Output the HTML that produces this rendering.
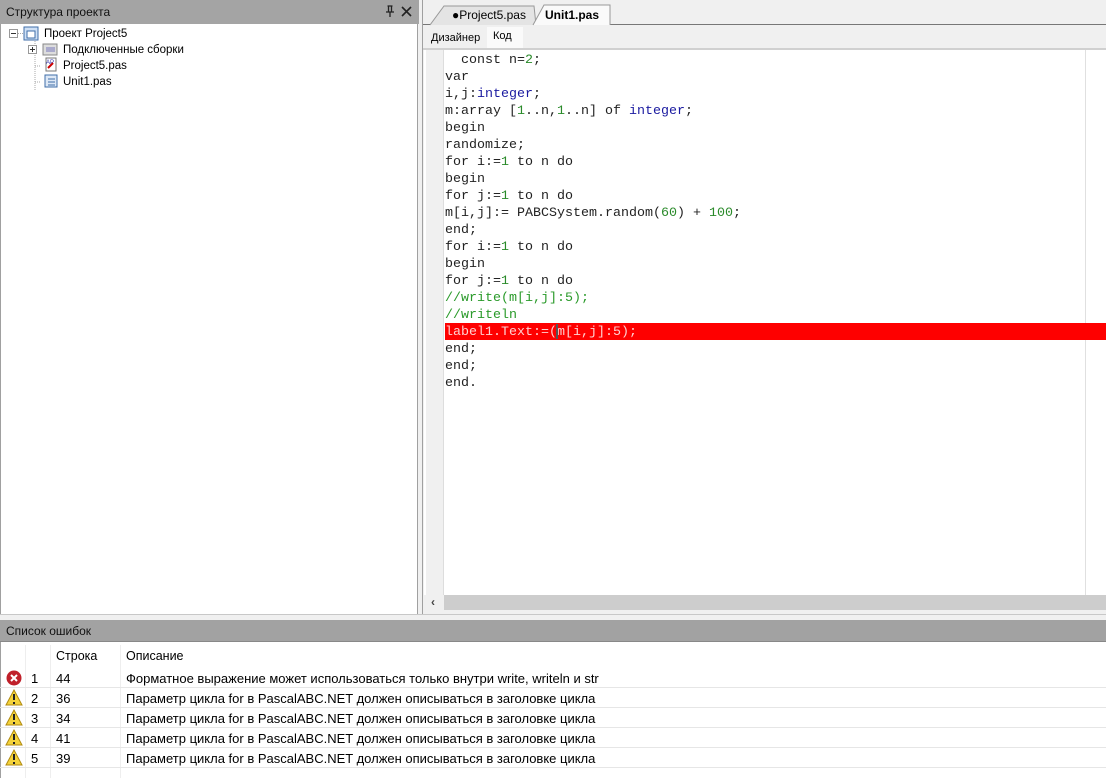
<!DOCTYPE html>
<html><head><meta charset="utf-8"><style>
*{margin:0;padding:0;box-sizing:border-box}
body{width:1106px;height:778px;background:#f0f0f0;position:relative;overflow:hidden;font-family:"Liberation Sans",sans-serif;font-size:12px;color:#000}
.abs{position:absolute}
.title{background:#a4a4a4;color:#111;font-size:12px;padding-left:6px;line-height:24px}
.code{font-family:"Liberation Mono",monospace;font-size:13.33px;line-height:17px;white-space:pre;color:#222}
.k{color:#1a1aa0}.n{color:#2a8a2a}.c{color:#2a9a2a}
.row{position:absolute;left:0;width:1106px;height:20px;border-bottom:1px solid #e6e6e6;line-height:21px;font-size:13px}
.row span{position:absolute}
.tree{font-size:11.5px;line-height:14px}
</style></head><body>
<!-- left panel -->
<div class="abs title" style="left:0;top:0;width:419px;height:24px">Структура проекта</div>
<div class="abs" style="left:386px;top:5px;width:8px;height:12px"><svg width="8" height="12"><path d="M1.5 1h5M2.5 1v6M5.5 1v6M0 7h8M4 7v5" stroke="#222" stroke-width="1.3" fill="none"/></svg></div>
<div class="abs" style="left:401px;top:6px"><svg width="11" height="11"><path d="M1 1L10 10M10 1L1 10" stroke="#222" stroke-width="1.6"/></svg></div>
<div class="abs" style="left:0;top:24px;width:418px;height:591px;background:#fff;border:1px solid #a0a0a0;border-top:none"></div>
<svg class="abs" style="left:0;top:24px" width="200" height="70">
<rect x="9.5" y="5.5" width="8" height="8" fill="#fff" stroke="#999"/><path d="M11 9.5h5" stroke="#333"/>
<path d="M18 9.5h6M35 15v52M35 26h-4M35 42h6M35 58h6" stroke="#aaa" stroke-dasharray="1 1"/>
<rect x="24" y="3" width="14" height="13" fill="#cfe0f5" stroke="#3f6ea8"/><rect x="27" y="7" width="8" height="7" fill="#fff" stroke="#3f6ea8"/>
<rect x="28.5" y="21.5" width="8" height="8" fill="#fff" stroke="#999"/><path d="M30 25.5h5M32.5 23v5" stroke="#333"/>
<rect x="43" y="20" width="14" height="11" fill="#ddd" stroke="#888"/><rect x="46" y="23" width="9" height="5" fill="#aac" />
<rect x="46" y="34" width="10" height="13" fill="#fff" stroke="#777"/><path d="M48 44l5-5" stroke="#c00" stroke-width="2"/><text x="46" y="40" font-size="6" fill="#33a" font-family="Liberation Sans">AP</text>
<rect x="45" y="51" width="12" height="12" fill="#dde8f6" stroke="#3f6ea8"/><path d="M48 55h7M48 58h7M48 61h7" stroke="#3f6ea8"/>
</svg>
<div class="abs tree" style="left:44px;top:27px">Проект Project5</div>
<div class="abs tree" style="left:63px;top:43px">Подключенные сборки</div>
<div class="abs tree" style="left:63px;top:59px">Project5.pas</div>
<div class="abs tree" style="left:63px;top:75px">Unit1.pas</div>

<!-- right panel -->
<div class="abs" style="left:422px;top:0;width:684px;height:616px;background:#f0f0f0;border-left:1px solid #a0a0a0"></div>
<div class="abs" style="left:423px;top:24px;width:683px;height:1px;background:#777"></div>
<svg class="abs" style="left:430px;top:4px" width="200" height="22"><path d="M0 21L14 2H104L106 21" fill="#e4e4e4" stroke="#999"/><path d="M103 21L114 1H180V21" fill="#fafafa" stroke="#999"/></svg>
<div class="abs" style="left:452px;top:8px;font-size:12px">●Project5.pas</div>
<div class="abs" style="left:545px;top:8px;font-size:12px;font-weight:bold">Unit1.pas</div>
<div class="abs" style="left:487px;top:27px;width:36px;height:22px;background:#fafafa"></div>
<div class="abs" style="left:431px;top:32px;font-size:11px">Дизайнер</div>
<div class="abs" style="left:493px;top:30px;font-size:11px">Код</div>
<div class="abs" style="left:423px;top:48px;width:683px;height:2px;background:#d0d0d0"></div>
<div class="abs" style="left:424px;top:50px;width:682px;height:545px;background:#fff"></div>
<div class="abs" style="left:426px;top:50px;width:18px;height:545px;background:#f0f0f0;border-right:1px solid #ddd"></div>
<div class="abs" style="left:1085px;top:50px;width:1px;height:545px;background:#e0e0e0"></div>
<div class="abs" style="left:445px;top:323px;width:661px;height:17px;background:#fe0000"></div>
<div class="abs code" style="left:445px;top:52px">  const n=<span class="n">2</span>;
var
i,j:<span class="k">integer</span>;
m:array [<span class="n">1</span>..n,<span class="n">1</span>..n] of <span class="k">integer</span>;
begin
randomize;
for i:=<span class="n">1</span> to n do
begin
for j:=<span class="n">1</span> to n do
m[i,j]:= PABCSystem.random(<span class="n">60</span>) + <span class="n">100</span>;
end;
for i:=<span class="n">1</span> to n do
begin
for j:=<span class="n">1</span> to n do
<span class="c">//write(m[i,j]:5);</span>
<span class="c">//writeln</span>
<span style="color:#ffd0d0">label1.Text:=(m[i,j]:5);</span>
end;
end;
end.</div>
<div class="abs" style="left:556px;top:324px;width:2px;height:15px;background:#555"></div>
<div class="abs" style="left:424px;top:595px;width:682px;height:15px;background:#f0f0f0"></div>
<div class="abs" style="left:444px;top:595px;width:662px;height:15px;background:#cdcdcd"></div>
<div class="abs" style="left:431px;top:595px;font-size:12px;font-weight:bold;color:#444">‹</div>

<!-- bottom -->
<div class="abs" style="left:0;top:614px;width:1106px;height:6px;background:#f0f0f0;border-top:1px solid #c8c8c8"></div>
<div class="abs title" style="left:0;top:620px;width:1106px;height:22px;line-height:22px;background:#a2a2a2;border-bottom:1px solid #888">Список ошибок</div>
<div class="abs" style="left:0;top:642px;width:1106px;height:136px;background:#fff;border-left:1px solid #a0a0a0"></div>
<div class="abs" style="left:25px;top:645px;width:1px;height:133px;background:#eee"></div>
<div class="abs" style="left:50px;top:645px;width:1px;height:133px;background:#eee"></div>
<div class="abs" style="left:120px;top:645px;width:1px;height:133px;background:#eee"></div>
<div class="row" style="top:646px;border:none;font-size:12.5px"><span style="left:56px">Строка</span><span style="left:126px">Описание</span></div>
<div class="row" style="top:668px"><span style="left:6px;top:2px"><svg width="16" height="16"><circle cx="8" cy="8" r="7.5" fill="#c0202a"/><path d="M5 5l6 6M11 5l-6 6" stroke="#fff" stroke-width="2"/></svg></span><span style="left:31px">1</span><span style="left:56px">44</span><span style="left:126px">Форматное выражение может использоваться только внутри write, writeln и str</span></div>
<div class="row" style="top:688px"><span style="left:5px;top:1px"><svg width="18" height="17"><path d="M9 1L17 16H1Z" fill="#f5d33a" stroke="#b08a10"/><path d="M9 5v6M9 13v2" stroke="#222" stroke-width="2"/></svg></span><span style="left:31px">2</span><span style="left:56px">36</span><span style="left:126px">Параметр цикла for в PascalABC.NET должен описываться в заголовке цикла</span></div>
<div class="row" style="top:708px"><span style="left:5px;top:1px"><svg width="18" height="17"><path d="M9 1L17 16H1Z" fill="#f5d33a" stroke="#b08a10"/><path d="M9 5v6M9 13v2" stroke="#222" stroke-width="2"/></svg></span><span style="left:31px">3</span><span style="left:56px">34</span><span style="left:126px">Параметр цикла for в PascalABC.NET должен описываться в заголовке цикла</span></div>
<div class="row" style="top:728px"><span style="left:5px;top:1px"><svg width="18" height="17"><path d="M9 1L17 16H1Z" fill="#f5d33a" stroke="#b08a10"/><path d="M9 5v6M9 13v2" stroke="#222" stroke-width="2"/></svg></span><span style="left:31px">4</span><span style="left:56px">41</span><span style="left:126px">Параметр цикла for в PascalABC.NET должен описываться в заголовке цикла</span></div>
<div class="row" style="top:748px"><span style="left:5px;top:1px"><svg width="18" height="17"><path d="M9 1L17 16H1Z" fill="#f5d33a" stroke="#b08a10"/><path d="M9 5v6M9 13v2" stroke="#222" stroke-width="2"/></svg></span><span style="left:31px">5</span><span style="left:56px">39</span><span style="left:126px">Параметр цикла for в PascalABC.NET должен описываться в заголовке цикла</span></div>
</body></html>
